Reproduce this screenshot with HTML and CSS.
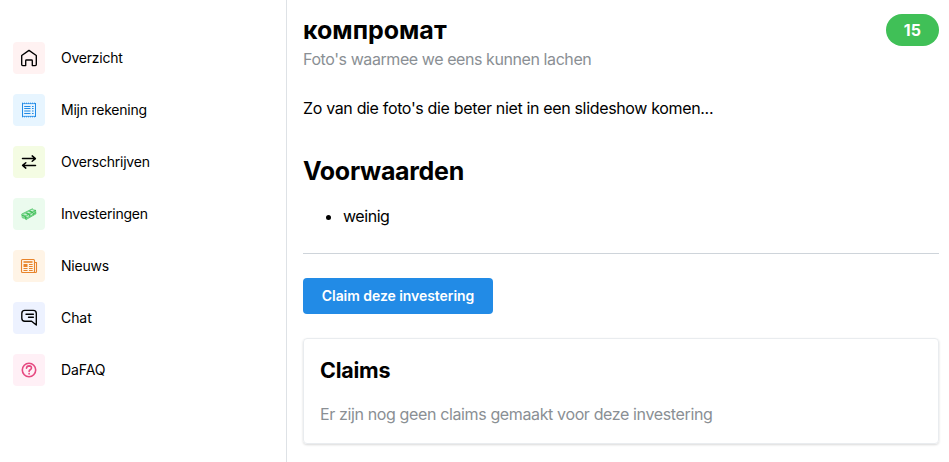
FILE: index.html
```html
<!DOCTYPE html>
<html lang="nl">
<head>
<meta charset="utf-8">
<title>Investeringen</title>
<link rel="stylesheet" href="styles.css">
</head>
<body>
<div class="layout">
<nav class="sidebar">
  <a class="link"><span class="icon red"><svg width="20" height="20" viewBox="0 0 20 20"><path d="M2.7 7.5 10 2.4l7.3 5.1v9.1q0 1-1 1h-3v-4.8q0-.8-.8-.8h-5q-.8 0-.8.8v4.8h-3q-1 0-1-1z"/></svg></span><span>Overzicht</span></a>
  <a class="link"><span class="icon blue"><svg width="20" height="20" viewBox="0 0 20 20"><path d="M3.5 3v14M16.5 3v14"/><path stroke-width=".8" d="M3 3.6h14M3 16.4h14"/><path stroke-dasharray="1 1" d="M3 3.2h14M3 16.8h14"/><path stroke-width="1.1" d="M5.2 6.5h6.3M5.2 8.5h6.3M5.2 11h6.3M5.2 13.5h6.3M13 6.5h1.6M13 8.5h1.6M13 11h1.6M13 13.5h1.6"/></svg></span><span>Mijn rekening</span></a>
  <a class="link"><span class="icon lime"><svg width="20" height="20" viewBox="0 0 20 20"><path stroke-width="1.5" d="M3.5 6.6h12.7M13.2 3.9l3.2 2.7-3.2 2.7M16.5 13.4H3.8M6.8 10.7l-3.2 2.7 3.2 2.7"/></svg></span><span>Overschrijven</span></a>
  <a class="link"><span class="icon green"><svg width="20" height="20" viewBox="0 0 20 20"><path stroke-width=".7" fill="#8fdca2" d="m3 9.9 10.4-5.1 1.3 1.2 1.8.2.5 3.6L7.2 15.5l-1.5-1.2-2-.4z"/><path stroke-width="1" d="M3.3 11.4l2.8.9.9 2.8M6.2 12.2l10.3-5.7M6.8 14l3-1.6M12 11.2l4.5-2.5M7.2 9.1l3 .8.7 2.6M10.6 7.2l2.8.8.8 2.8"/><path class="shine" d="m5.7 10.4 2 .6M9.1 8.5l2 .5M12.5 6.5l1.7.4M8.2 12.9l1.4-.8M12.2 10.6l1.4-.8"/></svg></span><span>Investeringen</span></a>
  <a class="link"><span class="icon orange"><svg width="20" height="20" viewBox="0 0 20 20"><rect x="2.5" y="3.5" width="13" height="13" rx="1"/><path d="M15.5 6.5h2v9q0 1-1 1h-2"/><path stroke-width="1.6" d="M4.5 6h9"/><path stroke-width="3" d="M4.5 9.5h4"/><path stroke-width="1" d="M10 8.5h3.7M10 10.5h3.7M4.5 12.5h4M10 12.5h3.7M4.5 14.5h4M10 14.5h3.7"/></svg></span><span>Nieuws</span></a>
  <a class="link chat"><span class="icon indigo"><svg width="20" height="20" viewBox="0 0 20 20"><path d="M17.3 17V5.4q0-3-3-3H5.8q-3 0-3 3v4.8q0 3 3 3h6.8zM7 6.2h7.4M9.5 9.2h4.9"/></svg></span><span>Chat</span></a>
  <a class="link chat"><span class="icon pink"><svg width="20" height="20" viewBox="0 0 20 20"><circle cx="10" cy="10" r="6.7" stroke-width="1.6"/><path stroke-width="1.6" d="M7.5 8.3q.2-2.4 2.6-2.4 2.4.1 2.4 2.1 0 1-1.3 1.8-1.1.7-1.1 1.6M10.1 13.5v.4"/></svg></span><span>DaFAQ</span></a>
</nav>
<main class="content">
  <header class="head">
    <div><h2 class="title">компромат</h2><p class="sub">Foto's waarmee we eens kunnen lachen</p></div>
    <span class="badge">15</span>
  </header>
  <p class="intro">Zo van die foto's die beter niet in een slideshow komen...</p>
  <h2 class="terms">Voorwaarden</h2>
  <ul class="list"><li>weinig</li></ul>
  <hr class="rule">
  <button class="claim">Claim deze investering</button>
  <section class="card">
    <h3 class="claims">Claims</h3>
    <p class="empty">Er zijn nog geen claims gemaakt voor deze investering</p>
  </section>
</main>
</div>
</body>
</html>
```
FILE: styles.css
```css
* { box-sizing: border-box; }
body { margin: 0; background: #fff; color: #000; font: 16px/24.8px Inter, "Liberation Sans", sans-serif; }
h2, h3, p, ul { margin: 0; }
.layout { display: flex; height: 462px; overflow: hidden; }
.sidebar { width: 287px; flex: none; border-right: 1px solid #dee2e6; padding: 32px 13px; }
.link { display: flex; align-items: center; gap: 16px; height: 52px; font-size: 14px; letter-spacing: -.23px; }
.chat { letter-spacing: -.08px; }
.icon { width: 32px; height: 32px; border-radius: 4px; display: grid; place-items: center; }
.icon svg { fill: none; stroke: currentColor; stroke-width: 1.35; stroke-linecap: round; stroke-linejoin: round; }
.red { background: #fff2f2; }
.blue { background: #e7f5ff; color: #228be6; }
.blue svg { stroke-width: 1; stroke-linecap: butt; }
.lime { background: #f4fce3; }
.green { background: #ebfbee; color: #40c057; }
.shine { stroke: #ebfbee; stroke-width: .8; }
.orange { background: #fff4e6; color: #e8842b; }
.orange svg { stroke-width: 1.1; stroke-linecap: butt; }
.indigo { background: #edf2ff; }
.pink { background: #fff0f6; color: #e64980; }
.content { flex: 1; padding: 12px 10px 0 16px; }
.head { display: flex; justify-content: space-between; align-items: flex-start; }
.title, .terms { padding-top: 2px; font-size: 25px; line-height: 33px; font-weight: 700; letter-spacing: 0; }
.sub { color: #8a8f94; letter-spacing: -.42px; }
.badge { width: 53px; height: 32px; margin-top: 2px; border-radius: 16px; background: #40c057; color: #fff; font-size: 16px; font-weight: 700; line-height: 32px; text-align: center; letter-spacing: .3px; }
.intro { margin-top: 24px; letter-spacing: -.34px; }
.terms { margin-top: 32px; letter-spacing: -.3px; }
.list { margin-top: 16px; padding-left: 40px; letter-spacing: -.45px; }
.rule { height: 1px; border: 0; background: #ced4da; margin: 25px 0 24px; }
.claim { display: block; width: 190px; height: 36px; padding: 0 0 1px; border: 0; border-radius: 4px; background: #228be6; color: #fff; font: 600 14px Inter, sans-serif; letter-spacing: -.06px; }
.card { margin-top: 24px; height: 106px; border: 1px solid #e9ecef; border-radius: 4px; padding: 16px; box-shadow: 0 1px 3px rgba(0,0,0,.08), 0 1px 2px rgba(0,0,0,.08); }
.claims { font-size: 21.5px; line-height: 31px; font-weight: 700; letter-spacing: -.25px; }
.empty { margin-top: 16px; color: #8a8f94; letter-spacing: -.37px; }
```
